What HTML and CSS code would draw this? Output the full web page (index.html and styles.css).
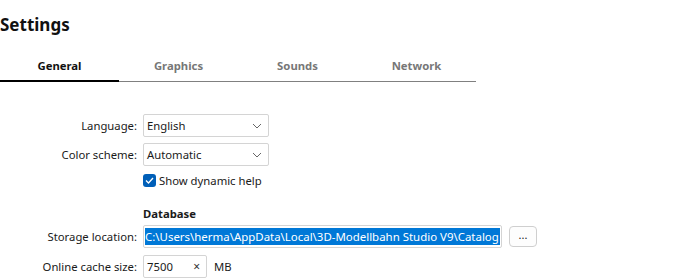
FILE: index.html
```html
<!DOCTYPE html>
<html lang="en">
<head>
  <meta charset="UTF-8" />
  <title>Settings</title>
  <link rel="stylesheet" href="styles.css">
</head>
<body>
  <h1 class="title">Settings</h1>

  <div class="tabs">
    <div class="tab active">General</div>
    <div class="tab">Graphics</div>
    <div class="tab">Sounds</div>
    <div class="tab">Network</div>
  </div>

  <div class="form">
    <label class="lbl">Language:</label>
    <div class="select sel-short">
      <span>English</span>
      <svg class="chev" width="10" height="6" viewBox="0 0 10 6"><path d="M1 1 L5 5 L9 1" fill="none" stroke="#666" stroke-width="1"/></svg>
    </div>

    <label class="lbl">Color scheme:</label>
    <div class="select sel-short">
      <span>Automatic</span>
      <svg class="chev" width="10" height="6" viewBox="0 0 10 6"><path d="M1 1 L5 5 L9 1" fill="none" stroke="#666" stroke-width="1"/></svg>
    </div>

    <span></span>
    <div class="check-row">
      <span class="checkbox">
        <svg width="9" height="7" viewBox="0 0 9 7"><path d="M1 3.5 L3.5 6 L8 1" fill="none" stroke="#fff" stroke-width="1.3"/></svg>
      </span>
      <span>Show dynamic help</span>
    </div>

    <span></span>
    <div class="section">Database</div>

    <label class="lbl">Storage location:</label>
    <div class="path-row">
      <div class="input wide"><span class="selected">C:\Users\herma\AppData\Local\3D-Modellbahn Studio V9\Catalog</span></div>
      <button class="browse">...</button>
    </div>

    <label class="lbl">Online cache size:</label>
    <div class="cache-row">
      <div class="input small"><span>7500</span><span class="clear">×</span></div>
      <span>MB</span>
    </div>
  </div>
</body>
</html>
```

FILE: styles.css
```css
/* Grundlayout */
body, html {
  margin: 0;
  padding: 0;
  background: #fff;
  color: #1a1a1a;
  font-family: 'Noto Sans', 'Open Sans', sans-serif;
  font-size: 11.3px;
  overflow: hidden;
}

.title {
  margin: 0;
  padding-top: 12px;
  font-size: 17px;
  font-weight: bold;
  line-height: 26px;
  color: #111;
}

/* Reiter */
.tabs {
  display: flex;
  width: 476px;
  margin-top: 20px;
  border-bottom: 1px solid #808080;
}

.tab {
  width: 119px;
  text-align: center;
  font-size: 11.3px;
  font-weight: bold;
  color: #777;
  line-height: 16px;
  padding-bottom: 6px;
  margin-bottom: -1px;
  border-bottom: 2px solid transparent;
}

.tab.active {
  color: #111;
  border-bottom-color: #000;
}

/* Formular */
.form {
  display: grid;
  grid-template-columns: 137px 1fr;
  column-gap: 6px;
  row-gap: 6px;
  margin-top: 32px;
  align-items: center;
}

.lbl {
  text-align: right;
}

.select, .input {
  box-sizing: border-box;
  height: 23px;
  border: 1px solid #d4d4d4;
  border-radius: 2px;
  background: #fff;
  display: flex;
  align-items: center;
}

.sel-short {
  width: 126px;
  padding: 0 6px 0 3px;
  justify-content: space-between;
}

.check-row {
  display: flex;
  align-items: center;
  gap: 3px;
  height: 15px;
  margin-top: 1px;
}

.checkbox {
  width: 13px;
  height: 13px;
  border-radius: 3px;
  background: #005fb8;
  display: flex;
  align-items: center;
  justify-content: center;
}

.section {
  font-weight: bold;
  margin-top: 12px;
  margin-bottom: -2px;
}

.path-row {
  display: flex;
  align-items: center;
  gap: 7px;
}

.input.wide {
  width: 359px;
  padding-left: 1px;
  overflow: hidden;
  white-space: nowrap;
}

.selected {
  background: #0078d7;
  color: #fff;
  font-size: 11.45px;
  line-height: 17px;
  padding-right: 1px;
}

.browse {
  width: 28px;
  height: 21px;
  border: 1px solid #cfcfcf;
  border-radius: 4px;
  background: #fdfdfd;
  font-family: inherit;
  font-size: 11px;
  color: #222;
  padding: 0 0 4px;
}

.cache-row {
  display: flex;
  align-items: center;
  gap: 7px;
  margin-top: 1px;
}

.input.small {
  width: 64px;
  padding: 0 6px 0 3px;
  justify-content: space-between;
}

.clear {
  font-size: 12px;
  color: #333;
}
```
